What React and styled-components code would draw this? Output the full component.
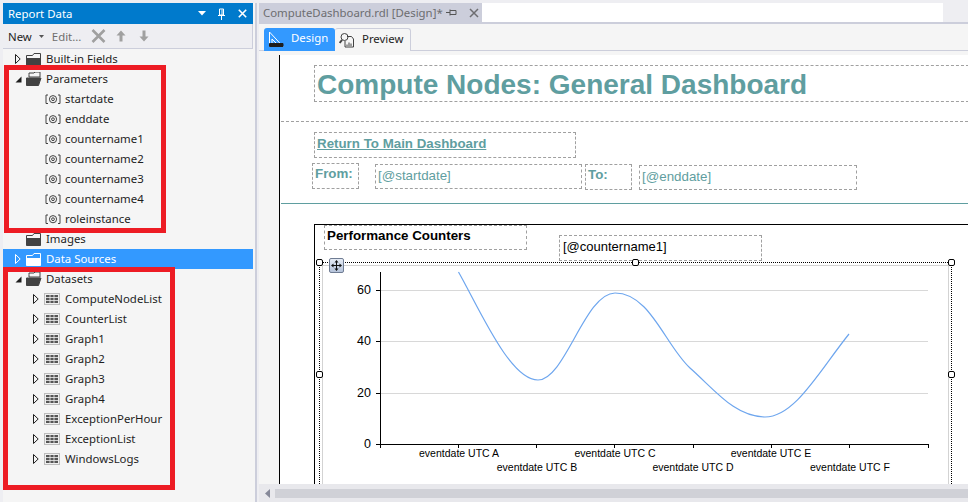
import styled, { createGlobalStyle } from "styled-components";

const GlobalStyle = createGlobalStyle`
  html, body {
    margin: 0;
    padding: 0;
    background: #eeeef2;
    overflow: hidden;
  }
`;

const Shell = styled.div`
  width: 968px;
  height: 502px;
  display: flex;
  padding-top: 3px;
  box-sizing: border-box;
  font-family: "Noto Sans", "Liberation Sans", sans-serif;
  font-size: 11.4px;
  overflow: hidden;
`;

/* left tool window */
const Panel = styled.div`
  position: relative;
  width: 252px;
  margin-left: 3px;
  display: flex;
  flex-direction: column;
  background: #f5f5f5;
  border-right: 2px solid #cccedb;
`;

const TitleBar = styled.div`
  width: 250px;
  height: 21px;
  background: #007acc;
  color: #fff;
  display: flex;
  align-items: center;
  padding: 0 6px 0 5px;
  box-sizing: border-box;
  gap: 8px;
`;

const Grip = styled.div`
  flex: 1;
  height: 5px;
  margin-left: 2px;
  background-image: radial-gradient(#59a8dd 0.6px, transparent 0.7px);
  background-size: 2px 2px;
`;

const Toolbar = styled.div`
  width: 250px;
  height: 25px;
  box-sizing: border-box;
  background: #eeeef2;
  border-bottom: 1px solid #cccedb;
  border-right: 1px solid #cccedb;
  display: flex;
  align-items: center;
  padding-left: 5px;
`;

const ToolText = styled.span`
  color: ${(p) => (p.$off ? "#6d6d6d" : "#1e1e1e")};
  margin-left: ${(p) => p.$gap || 0}px;
`;

const ToolIcon = styled.svg`
  display: block;
  flex: none;
  margin-left: ${(p) => p.$gap || 0}px;
`;

const Tree = styled.div`
  flex: 1;
  display: flex;
  flex-direction: column;
  width: 250px;
`;

const Row = styled.div`
  height: 20px;
  flex: none;
  display: flex;
  align-items: center;
  padding-left: ${(p) => p.$indent}px;
  color: ${(p) => (p.$selected ? "#fff" : "#1e1e1e")};
  background: ${(p) => (p.$selected ? "#3399ff" : "transparent")};
`;

const RowLabel = styled.span`
  margin-top: -2px;
`;

const ArrowSlot = styled.span`
  width: 11px;
  height: 11px;
  flex: none;
  display: flex;
  align-items: center;
`;

const RowIcon = styled.span`
  display: flex;
  flex: none;
  width: ${(p) => p.$w}px;
  margin-right: ${(p) => p.$gap}px;
`;

const Highlight = styled.div`
  position: absolute;
  box-sizing: border-box;
  border: 5px solid #ed1c24;
  pointer-events: none;
  left: ${(p) => p.$left}px;
  top: ${(p) => p.$top}px;
  width: ${(p) => p.$w}px;
  height: ${(p) => p.$h}px;
`;

/* document area */
const Main = styled.div`
  flex: 1;
  min-width: 0;
  margin-left: 2px;
  display: flex;
  flex-direction: column;
`;

const FileStrip = styled.div`
  height: 21px;
  flex: none;
  display: flex;
  box-sizing: border-box;
  border-bottom: 2px solid #cccedb;
`;

const FileTab = styled.div`
  width: 223px;
  box-sizing: border-box;
  background: #cccedb;
  color: #6d6d70;
  display: flex;
  align-items: center;
  padding-left: 4px;
`;

const FileTabName = styled.span`
  flex: 1;
  white-space: nowrap;
`;

const FileBlank = styled.div`
  width: 461px;
  background: #fff;
`;

const ViewTabs = styled.div`
  height: 27px;
  flex: none;
  box-sizing: border-box;
  background: #f5f5f5;
  border-bottom: 1px solid #cccedb;
  display: flex;
  align-items: flex-end;
  padding: 0 0 0 5px;
`;

const ViewTab = styled.div`
  height: 23px;
  margin-bottom: -1px;
  box-sizing: border-box;
  width: ${(p) => (p.$active ? 71 : 76)}px;
  display: flex;
  align-items: center;
  gap: 7px;
  padding-left: 4px;
  color: ${(p) => (p.$active ? "#fff" : "#1e1e1e")};
  background: ${(p) => (p.$active ? "#3399ff" : "#f5f5f5")};
  border: ${(p) => (p.$active ? "none" : "1px solid #cccedb")};
  border-left: none;
  border-bottom: none;
  border-top-right-radius: 3px;
  border-top-left-radius: 3px;
`;

const ViewTabLabel = styled.span`
  margin-top: -4px;
`;

const Surface = styled.div`
  flex: 1;
  min-height: 0;
  display: flex;
  padding-top: 4px;
  background: #f5f5f5;
`;

const Gutter = styled.div`
  width: 20px;
  flex: none;
  background: #f5f5f5;
  border-right: 1px solid #000;
`;

const Canvas = styled.div`
  position: relative;
  flex: 1;
  background: #fff;
  overflow: hidden;
`;

/* report items sit at free positions on the design canvas; canvas origin is 280,55 */
const ReportItem = styled.div`
  position: absolute;
  box-sizing: border-box;
  border: 1px dashed #a0a0a0;
  font-family: "Liberation Sans", Arial, sans-serif;
  font-size: 13.33px;
  color: #5f9ea0;
  white-space: nowrap;
  overflow: hidden;
  padding: 2px 2px;
`;

const TitleBox = styled(ReportItem)`
  left: 34px;
  top: 10px;
  width: 660px;
  height: 37px;
  font-size: 28px;
  font-weight: bold;
  line-height: 37px;
  padding: 0 2px;
`;

const HeaderRule = styled.div`
  position: absolute;
  left: 1px;
  right: 0;
  top: 66px;
  border-top: 1px dashed #a0a0a0;
`;

const ReturnBox = styled(ReportItem)`
  left: 34px;
  top: 77px;
  width: 262px;
  height: 26px;
  font-weight: bold;
  text-decoration: underline;
  padding-top: 3px;
`;

const FromBox = styled(ReportItem)`
  left: 32px;
  top: 108px;
  width: 47px;
  height: 26px;
  font-weight: bold;
`;

const StartBox = styled(ReportItem)`
  left: 95px;
  top: 109px;
  width: 207px;
  height: 25px;
  padding-top: 3px;
`;

const ToBox = styled(ReportItem)`
  left: 305px;
  top: 109px;
  width: 47px;
  height: 26px;
  font-weight: bold;
`;

const EndBox = styled(ReportItem)`
  left: 359px;
  top: 110px;
  width: 218px;
  height: 25px;
  padding-top: 3px;
`;

const SectionRule = styled.div`
  position: absolute;
  left: 1px;
  right: 0;
  top: 148px;
  border-top: 1px solid #5f9ea0;
`;

const ReportBody = styled.div`
  position: absolute;
  left: 34px;
  right: -4px;
  top: 169px;
  bottom: -4px;
  border: 1px solid #000;
`;

const CounterHeading = styled(ReportItem)`
  left: 44px;
  top: 170px;
  width: 203px;
  height: 25px;
  font-weight: bold;
  color: #000;
`;

const CounterName = styled(ReportItem)`
  left: 279px;
  top: 180px;
  width: 203px;
  height: 26px;
  color: #000;
  font-size: 13px;
  padding: 3px 3px;
`;

const ChartFrame = styled.div`
  position: absolute;
  left: 39px;
  top: 207px;
  width: 633px;
  height: 222px;
  box-sizing: border-box;
  border: 1px dotted #000;
  border-bottom: none;
`;

const ChartSvg = styled.svg`
  display: block;
  position: absolute;
  left: -1px;
  top: -1px;
`;

const Handle = styled.span`
  position: absolute;
  width: 7px;
  height: 7px;
  box-sizing: border-box;
  background: #fff;
  border: 1px solid #000;
  border-radius: 2px;
  left: ${(p) => p.$x - 280 - 3}px;
  top: ${(p) => p.$y - 55 - 3}px;
`;

const MoveHandle = styled.div`
  position: absolute;
  left: 49px;
  top: 203px;
  width: 15px;
  height: 15px;
  box-sizing: border-box;
  border: 1px solid #6f7c93;
  border-radius: 2px;
  background: linear-gradient(#e6ecf5, #b5c3da);
  display: flex;
  align-items: center;
  justify-content: center;
`;

const ScrollTrack = styled.div`
  height: 18px;
  flex: none;
  display: flex;
  align-items: center;
  background: #e8e8ec;
  padding-left: 5px;
  gap: 5px;
`;

const ScrollThumb = styled.div`
  flex: 1;
  height: 9px;
  background: #d0d1d7;
`;

const Arrow = ({ open, light }) =>
  open ? (
    <svg width="7" height="7" viewBox="0 0 7 7">
      <path d="M6.5 0.5V6.5H0.5Z" fill="#1e1e1e" />
    </svg>
  ) : (
    <svg width="6" height="10" viewBox="0 0 6 10">
      <path d="M0.5 0.5L5.2 5L0.5 9.5Z" fill="none" stroke={light ? "#fff" : "#1e1e1e"} />
    </svg>
  );

const Folder = ({ open, light }) => {
  const c = light ? "#fff" : "#424242";
  return open ? (
    <svg width="16" height="14" viewBox="0 0 16 14">
      <path d="M3 2.5V1H8L9 0H14V5H3Z" fill="#f5f5f5" stroke={c} />
      <path d="M0.5 6H15L12.5 13.5H0.5Z" fill={c} stroke={c} />
    </svg>
  ) : (
    <svg width="15" height="13" viewBox="0 0 15 13">
      <path d="M0.5 2.5H6.5L8 0.5H14.5V12.5H0.5Z" fill={light ? "#3399ff" : "#f5f5f5"} stroke={c} />
      <rect x="0.5" y="5" width="14" height="7.5" fill={c} />
    </svg>
  );
};

const ParamIcon = () => (
  <svg width="16" height="11" viewBox="0 0 16 11" fill="none" stroke="#424242">
    <path d="M3 1H1V9.5H3M13 1H15V9.5H13" />
    <circle cx="8" cy="5.2" r="3.6" />
    <circle cx="8" cy="5.2" r="1.4" />
  </svg>
);

const TableIcon = () => (
  <svg width="16" height="12" viewBox="0 0 16 12">
    <rect x="0.5" y="0.5" width="15" height="11" fill="#f0f0f0" stroke="#bdbdbd" />
    <rect x="2" y="2" width="12" height="8" fill="#555" />
    <path d="M2 4.5H14M2 7.5H14M6 2V10M10 2V10" stroke="#f0f0f0" strokeWidth="0.8" />
  </svg>
);

const ParamRow = ({ name }) => (
  <Row $indent={42}>
    <RowIcon $w={16} $gap={4}>
      <ParamIcon />
    </RowIcon>
    <RowLabel>{name}</RowLabel>
  </Row>
);

const DatasetRow = ({ name }) => (
  <Row $indent={30}>
    <ArrowSlot>
      <Arrow />
    </ArrowSlot>
    <RowIcon $w={16} $gap={5}>
      <TableIcon />
    </RowIcon>
    <RowLabel>{name}</RowLabel>
  </Row>
);

const params = ["startdate", "enddate", "countername1", "countername2", "countername3", "countername4", "roleinstance"];
const datasets = [
  "ComputeNodeList",
  "CounterList",
  "Graph1",
  "Graph2",
  "Graph3",
  "Graph4",
  "ExceptionPerHour",
  "ExceptionList",
  "WindowsLogs",
];

const grid = [290, 341, 393];
const ticks = [380, 458, 536, 614, 693, 771, 849, 928];
const yLabels = [
  ["60", 294],
  ["40", 345],
  ["20", 397],
  ["0", 448],
];
const xLabels = [
  ["eventdate UTC A", 459, 457],
  ["eventdate UTC B", 537, 471],
  ["eventdate UTC C", 615, 457],
  ["eventdate UTC D", 693, 471],
  ["eventdate UTC E", 771, 457],
  ["eventdate UTC F", 850, 471],
];

const Chart = () => (
  <ChartSvg width="633" height="222" viewBox="319 262 633 222" fontFamily="Liberation Sans, Arial, sans-serif">
    <path d="M322 265.5H948M322.5 265V484M948.5 265V484" fill="none" stroke="#d3d3d3" />
    {grid.map((y) => (
      <path key={y} d={`M376 ${y + 0.5}H928`} stroke="#d8d8d8" />
    ))}
    {grid.map((y) => (
      <path key={y} d={`M376 ${y + 0.5}H381`} stroke="#000" />
    ))}
    <path d="M380.5 272V444.5" stroke="#000" strokeWidth="1" />
    <path d="M376 444.5H928" stroke="#000" />
    {ticks.map((x) => (
      <path key={x} d={`M${x + 0.5} 444V448`} stroke="#000" />
    ))}
    <path
      d="M458.5 272C480 310 510 380 538 380C565 380 585 293 615 293C650 293 665 345 690 368C715 390 735 417 765 417C795 417 820 370 849 334"
      fill="none"
      stroke="#6ea6ee"
      strokeWidth="1.2"
    />
    {yLabels.map(([t, y]) => (
      <text key={t} x="371" y={y} textAnchor="end" fontSize="12.5" fill="#000">
        {t}
      </text>
    ))}
    {xLabels.map(([t, x, y]) => (
      <text key={t} x={x} y={y} textAnchor="middle" fontSize="10.5" fill="#000">
        {t}
      </text>
    ))}
  </ChartSvg>
);

const App = () => (
  <>
    <GlobalStyle />
    <Shell>
      <Panel>
        <TitleBar>
          <span>Report Data</span>
          <Grip />
          <svg width="8" height="5" viewBox="0 0 8 5">
            <path d="M0 0H8L4 4.5Z" fill="#fff" />
          </svg>
          <svg width="9" height="12" viewBox="0 0 9 12" fill="none" stroke="#fff" style={{ marginLeft: 3 }}>
            <path d="M2.5 1H6.5V7H2.5ZM5 1.5V7M1 7.5H8M4.5 8V12" />
          </svg>
          <svg width="9" height="9" viewBox="0 0 9 9" style={{ marginLeft: 4 }}>
            <path d="M0.8 0.8L8.2 8.2M8.2 0.8L0.8 8.2" stroke="#fff" strokeWidth="1.6" />
          </svg>
        </TitleBar>
        <Toolbar>
          <ToolText>New</ToolText>
          <ToolIcon $gap={7} width="5" height="3" viewBox="0 0 5 3">
            <path d="M0 0H5L2.5 3Z" fill="#555" />
          </ToolIcon>
          <ToolText $off $gap={8}>
            Edit...
          </ToolText>
          <ToolIcon $gap={10} width="15" height="14" viewBox="0 0 15 14">
            <path d="M1.5 1L13.5 13M13.5 1L1.5 13" stroke="#a0a0a0" strokeWidth="2.6" />
          </ToolIcon>
          <ToolIcon $gap={10} width="10" height="12" viewBox="0 0 10 12">
            <path d="M5 0.5L9.5 5.5H6.5V11.5H3.5V5.5H0.5Z" fill="#a0a0a0" />
          </ToolIcon>
          <ToolIcon $gap={13} width="10" height="12" viewBox="0 0 10 12">
            <path d="M5 11.5L9.5 6.5H6.5V0.5H3.5V6.5H0.5Z" fill="#a0a0a0" />
          </ToolIcon>
        </Toolbar>
        <Tree>
          <Row $indent={12}>
            <ArrowSlot>
              <Arrow />
            </ArrowSlot>
            <RowIcon $w={20} $gap={0}>
              <Folder />
            </RowIcon>
            <RowLabel>Built-in Fields</RowLabel>
          </Row>
          <Row $indent={12}>
            <ArrowSlot>
              <Arrow open />
            </ArrowSlot>
            <RowIcon $w={20} $gap={0}>
              <Folder open />
            </RowIcon>
            <RowLabel>Parameters</RowLabel>
          </Row>
          {params.map((p) => (
            <ParamRow key={p} name={p} />
          ))}
          <Row $indent={23}>
            <RowIcon $w={20} $gap={0}>
              <Folder />
            </RowIcon>
            <RowLabel>Images</RowLabel>
          </Row>
          <Row $indent={12} $selected>
            <ArrowSlot>
              <Arrow light />
            </ArrowSlot>
            <RowIcon $w={20} $gap={0}>
              <Folder light />
            </RowIcon>
            <RowLabel>Data Sources</RowLabel>
          </Row>
          <Row $indent={12}>
            <ArrowSlot>
              <Arrow open />
            </ArrowSlot>
            <RowIcon $w={20} $gap={0}>
              <Folder open />
            </RowIcon>
            <RowLabel>Datasets</RowLabel>
          </Row>
          {datasets.map((d) => (
            <DatasetRow key={d} name={d} />
          ))}
        </Tree>
        <Highlight $left={1} $top={62} $w={162} $h={168} />
        <Highlight $left={0} $top={264} $w={172} $h={223} />
      </Panel>
      <Main>
        <FileStrip>
          <FileTab>
            <FileTabName>ComputeDashboard.rdl [Design]*</FileTabName>
            <svg width="11" height="11" viewBox="0 0 11 11" fill="none" stroke="#555">
              <path d="M4 2.5V8.5M4 3.5H10V7.5H4M0 5.5H4" />
            </svg>
            <svg width="10" height="10" viewBox="0 0 10 10" style={{ margin: "0 3px 0 12px" }}>
              <path d="M1 1L9 9M9 1L1 9" stroke="#6d6d70" strokeWidth="1.5" />
            </svg>
          </FileTab>
          <FileBlank />
        </FileStrip>
        <ViewTabs>
          <ViewTab $active>
            <svg width="16" height="17" viewBox="0 0 16 17" fill="none" stroke="#fff">
              <path d="M1.5 1V15.5H15L1.5 1Z" />
              <path d="M4 8V13H9Z" />
              <path d="M1.5 12.5H15V15.5H1.5Z" fill="#1e1e1e" stroke="#1e1e1e" />
            </svg>
            <ViewTabLabel>Design</ViewTabLabel>
          </ViewTab>
          <ViewTab>
            <svg width="16" height="16" viewBox="0 0 16 16" fill="none" stroke="#424242">
              <circle cx="5.5" cy="5" r="3.5" />
              <path d="M3 8L0.7 11" strokeWidth="2" />
              <path d="M8 4.5H12.5L14.5 7V15H6V9" />
              <path d="M8 12.5V14M10 10.5V14M12 11.5V14" />
            </svg>
            <ViewTabLabel>Preview</ViewTabLabel>
          </ViewTab>
        </ViewTabs>
        <Surface>
          <Gutter />
          <Canvas>
            <TitleBox>Compute Nodes: General Dashboard</TitleBox>
            <HeaderRule />
            <ReturnBox>Return To Main Dashboard</ReturnBox>
            <FromBox>From:</FromBox>
            <StartBox>[@startdate]</StartBox>
            <ToBox>To:</ToBox>
            <EndBox>[@enddate]</EndBox>
            <SectionRule />
            <ReportBody />
            <CounterHeading>Performance Counters</CounterHeading>
            <CounterName>[@countername1]</CounterName>
            <ChartFrame>
              <Chart />
            </ChartFrame>
            <Handle $x={319} $y={262} />
            <Handle $x={635} $y={262} />
            <Handle $x={951} $y={262} />
            <Handle $x={319} $y={374} />
            <Handle $x={951} $y={374} />
            <MoveHandle>
              <svg width="11" height="11" viewBox="0 0 11 11">
                <path d="M5.5 0L7.5 2.5H3.5ZM5.5 11L3.5 8.5H7.5ZM0 5.5L2.5 3.5V7.5ZM11 5.5L8.5 7.5V3.5Z" fill="#111" />
                <path d="M5.5 2V9M2 5.5H9" stroke="#111" />
              </svg>
            </MoveHandle>
          </Canvas>
        </Surface>
        <ScrollTrack>
          <svg width="5" height="9" viewBox="0 0 5 9" style={{ marginLeft: 1 }}>
            <path d="M5 0V9L0 4.5Z" fill="#868999" />
          </svg>
          <ScrollThumb />
        </ScrollTrack>
      </Main>
    </Shell>
  </>
);

export default App;
